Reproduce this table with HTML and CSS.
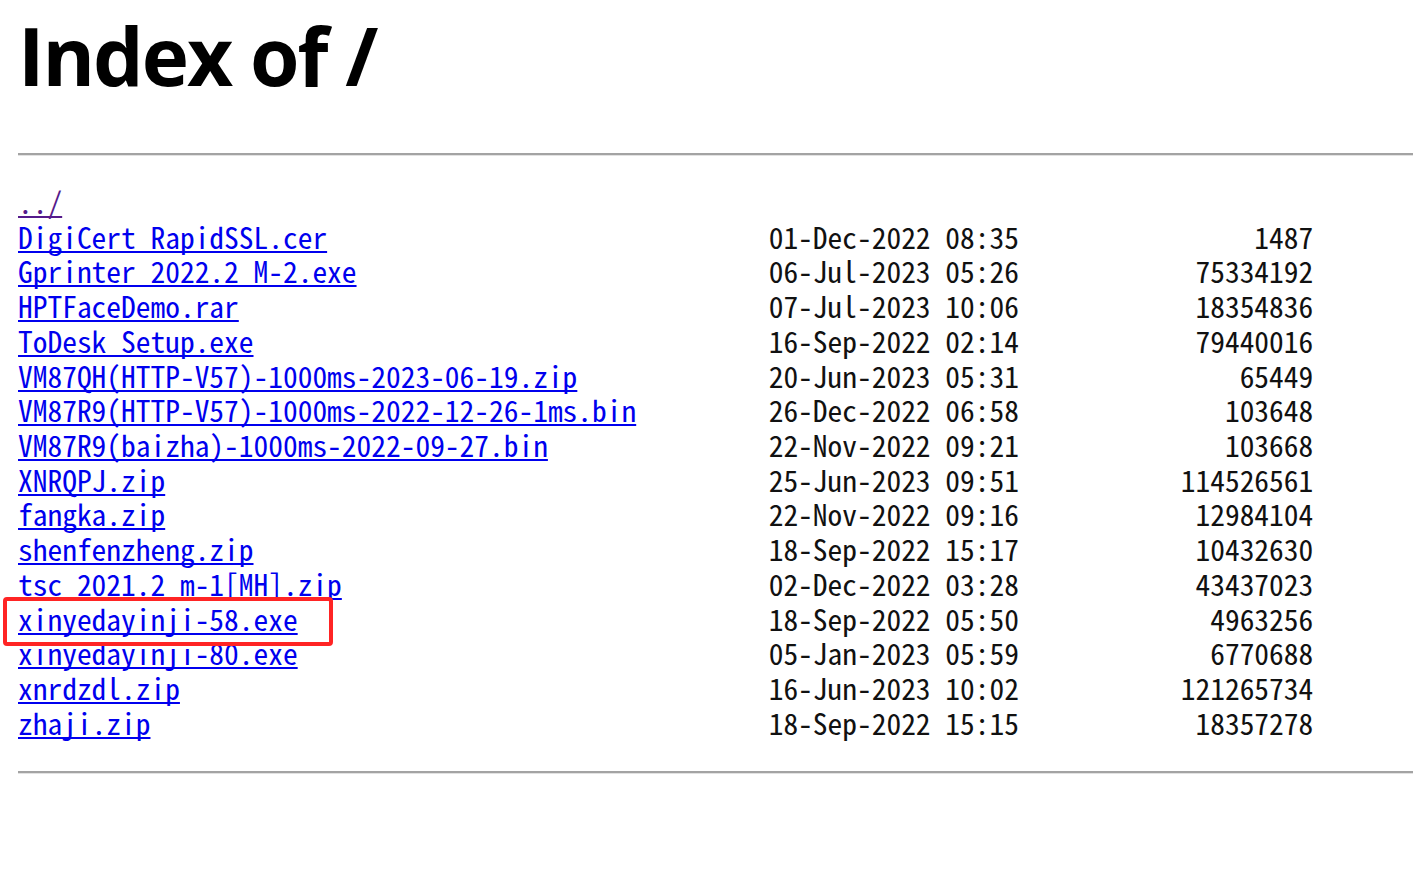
FILE: index.html
```html
<!DOCTYPE html>
<html lang="en">
<head>
    <meta charset="UTF-8">
    <title>Index of /</title>
    <link rel="stylesheet" href="styles.css">
</head>
<body>
    <h1>Index of /</h1>
    <hr>

    <!-- Directory listing: name | date | size -->
    <div class="listing">
        <div class="row"><a class="visited" href="../">../</a></div>
        <div class="row"><a href="#">DigiCert_RapidSSL.cer</a><span>01-Dec-2022 08:35</span><span class="size">1487</span></div>
        <div class="row"><a href="#">Gprinter_2022.2_M-2.exe</a><span>06-Jul-2023 05:26</span><span class="size">75334192</span></div>
        <div class="row"><a href="#">HPTFaceDemo.rar</a><span>07-Jul-2023 10:06</span><span class="size">18354836</span></div>
        <div class="row"><a href="#">ToDesk_Setup.exe</a><span>16-Sep-2022 02:14</span><span class="size">79440016</span></div>
        <div class="row"><a href="#">VM87QH(HTTP-V57)-1000ms-2023-06-19.zip</a><span>20-Jun-2023 05:31</span><span class="size">65449</span></div>
        <div class="row"><a href="#">VM87R9(HTTP-V57)-1000ms-2022-12-26-1ms.bin</a><span>26-Dec-2022 06:58</span><span class="size">103648</span></div>
        <div class="row"><a href="#">VM87R9(baizha)-1000ms-2022-09-27.bin</a><span>22-Nov-2022 09:21</span><span class="size">103668</span></div>
        <div class="row"><a href="#">XNRQPJ.zip</a><span>25-Jun-2023 09:51</span><span class="size">114526561</span></div>
        <div class="row"><a href="#">fangka.zip</a><span>22-Nov-2022 09:16</span><span class="size">12984104</span></div>
        <div class="row"><a href="#">shenfenzheng.zip</a><span>18-Sep-2022 15:17</span><span class="size">10432630</span></div>
        <div class="row"><a href="#">tsc_2021.2_m-1[MH].zip</a><span>02-Dec-2022 03:28</span><span class="size">43437023</span></div>
        <div class="row"><a href="#">xinyedayinji-58.exe</a><span>18-Sep-2022 05:50</span><span class="size">4963256</span></div>
        <div class="row"><a href="#">xinyedayinji-80.exe</a><span>05-Jan-2023 05:59</span><span class="size">6770688</span></div>
        <div class="row"><a href="#">xnrdzdl.zip</a><span>16-Jun-2023 10:02</span><span class="size">121265734</span></div>
        <div class="row"><a href="#">zhaji.zip</a><span>18-Sep-2022 15:15</span><span class="size">18357278</span></div>
    </div>

    <hr>

    <!-- red annotation box over one entry -->
    <div class="highlight"></div>
</body>
</html>
```

FILE: styles.css
```css
/* Page */
body {
    margin: 0;
    padding: 15px 0 0 18px;
    background-color: #fff;
    color: #000;
    position: relative;
}

h1 {
    margin: 0;
    font-family: "Open Sans", "Noto Sans", sans-serif;
    font-weight: bold;
    font-size: 80px;
    line-height: 80px;
    letter-spacing: -2px;
}

hr {
    margin: 58px 0 0 0;
    height: 0;
    border: none;
    border-top: 2px solid #a3a3a3;
    border-bottom: 1px solid #e2e2e2;
}

/* Listing */
.listing {
    margin: 28px 0 31px 0;
    font-family: "Noto Sans Mono CJK SC", "Liberation Mono", monospace;
    font-size: 29.44px;
    line-height: 34.72px;
    color: #111;
}

.listing + hr {
    margin-top: 0;
}

.row {
    display: grid;
    grid-template-columns: 51ch 17ch 20ch;
    white-space: pre;
}

.row a {
    color: #0000ee;
    text-decoration: underline;
    text-decoration-skip-ink: none;
}

.row a.visited {
    color: #551a8b;
}

.size {
    text-align: right;
}

/* Annotation */
.highlight {
    position: absolute;
    left: 3px;
    top: 597px;
    width: 322px;
    height: 41px;
    border: 4px solid #ff2424;
    border-radius: 4px;
}
```
